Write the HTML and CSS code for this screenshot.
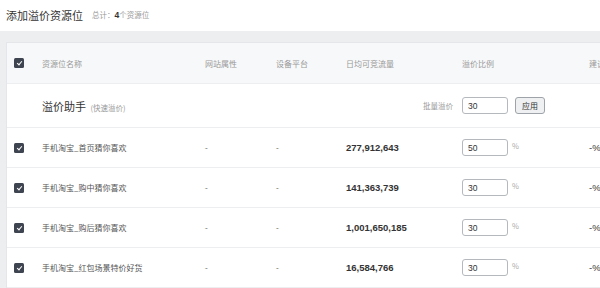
FILE: index.html
```html
<!DOCTYPE html>
<html lang="zh">
<head>
<meta charset="utf-8">
<link rel="stylesheet" href="styles.css">
</head>
<body>
<div class="top">
  <span class="title">添加溢价资源位</span>
  <span class="total">总计：<b>4</b>个资源位</span>
</div>
<div class="band">
  <div class="card">
    <div class="row head">
      <div class="cb"><span class="check"></span></div>
      <div>资源位名称</div>
      <div>网站属性</div>
      <div>设备平台</div>
      <div>日均可竞流量</div>
      <div>溢价比例</div>
      <div>建议溢价</div>
    </div>
    <div class="helper">
      <div class="helper-title">溢价助手 <span class="sub">(快速溢价)</span></div>
      <div class="batch">
        <span class="batch-label">批量溢价</span>
        <span class="inp">30</span>
        <span class="btn">应用</span>
      </div>
    </div>
    <div class="row item">
      <div class="cb"><span class="check"></span></div>
      <div>手机淘宝_首页猜你喜欢</div>
      <div>-</div>
      <div>-</div>
      <div class="num">277,912,643</div>
      <div class="pct"><span class="inp">50</span><span class="unit">%</span></div>
      <div class="adv">-%</div>
    </div>
    <div class="row item">
      <div class="cb"><span class="check"></span></div>
      <div>手机淘宝_购中猜你喜欢</div>
      <div>-</div>
      <div>-</div>
      <div class="num">141,363,739</div>
      <div class="pct"><span class="inp">30</span><span class="unit">%</span></div>
      <div class="adv">-%</div>
    </div>
    <div class="row item">
      <div class="cb"><span class="check"></span></div>
      <div>手机淘宝_购后猜你喜欢</div>
      <div>-</div>
      <div>-</div>
      <div class="num">1,001,650,185</div>
      <div class="pct"><span class="inp">30</span><span class="unit">%</span></div>
      <div class="adv">-%</div>
    </div>
    <div class="row item">
      <div class="cb"><span class="check"></span></div>
      <div>手机淘宝_红包场景特价好货</div>
      <div>-</div>
      <div>-</div>
      <div class="num">16,584,766</div>
      <div class="pct"><span class="inp">30</span><span class="unit">%</span></div>
      <div class="adv">-%</div>
    </div>
  </div>
</div>
</body>
</html>
```
FILE: styles.css
```css
html, body {
  margin: 0;
  padding: 0;
  width: 600px;
  height: 288px;
  overflow: hidden;
  background: #fff;
  font-family: "Noto Sans CJK SC", "Liberation Sans", sans-serif;
  color: #555;
}
.top {
  height: 31px;
  display: flex;
  align-items: center;
  padding-left: 6px;
  box-sizing: border-box;
  padding-bottom: 2px;
}
.title {
  font-size: 11px;
  color: #333;
}
.total {
  font-size: 7.5px;
  color: #999;
  margin-left: 9px;
}
.total b {
  color: #333;
  font-family: "Liberation Sans", sans-serif;
  font-size: 8.5px;
}
.band {
  background: #eceef0;
  padding: 11px 0 0 6px;
  height: 257px;
  box-sizing: border-box;
}
.card {
  background: #fff;
  width: 700px;
  border-left: 1px solid #e4e6e9;
  border-top: 1px solid #e4e6e9;
}
.row {
  display: grid;
  grid-template-columns: 35px 163px 71px 70px 116px 127px 1fr;
  align-items: center;
  font-size: 8px;
}
.head {
  height: 40px;
  background: #f7f8f9;
  color: #999;
  border-bottom: 1px solid #eceef0;
}
.cb {
  display: flex;
  padding-left: 7px;
}
.check {
  width: 10px;
  height: 10px;
  border-radius: 1.5px;
  background: #3f4550;
  position: relative;
}
.check::after {
  content: "";
  position: absolute;
  left: 3.5px;
  top: 2px;
  width: 2px;
  height: 4px;
  border: solid #fff;
  border-width: 0 1.2px 1.2px 0;
  transform: rotate(40deg);
}
.helper {
  height: 44px;
  display: flex;
  align-items: center;
  justify-content: space-between;
  padding-left: 35px;
  padding-right: 162px;
  box-sizing: border-box;
  border-bottom: 1px solid #eceef0;
}
.helper-title {
  font-size: 11px;
  color: #333;
}
.sub {
  font-size: 7.5px;
  color: #999;
  margin-left: 2px;
}
.batch {
  display: flex;
  align-items: center;
}
.batch-label {
  font-size: 7.5px;
  color: #999;
  margin-right: 9px;
}
.inp {
  display: inline-flex;
  align-items: center;
  width: 46px;
  height: 17px;
  box-sizing: border-box;
  border: 1px solid #b5b8bc;
  border-radius: 3px;
  padding-left: 5px;
  font-family: "Liberation Sans", sans-serif;
  font-size: 8.5px;
  color: #333;
  background: #fff;
}
.btn {
  margin-left: 7px;
  width: 30px;
  height: 17px;
  box-sizing: border-box;
  border: 1px solid #9ea3a9;
  border-radius: 3px;
  background: #eef0f2;
  display: inline-flex;
  align-items: center;
  justify-content: center;
  font-size: 8px;
  color: #333;
}
.item {
  height: 39px;
  border-bottom: 1px solid #eceef0;
  color: #555;
}
.num {
  font-family: "Liberation Sans", sans-serif;
  font-weight: 700;
  font-size: 9.5px;
  color: #333;
}
.pct {
  display: flex;
  align-items: center;
}
.unit {
  margin-left: 4px;
  font-size: 7.5px;
  color: #aaa;
  margin-top: -4px;
}
.adv {
  font-family: "Liberation Sans", sans-serif;
  font-size: 9.5px;
  color: #333;
}
```
